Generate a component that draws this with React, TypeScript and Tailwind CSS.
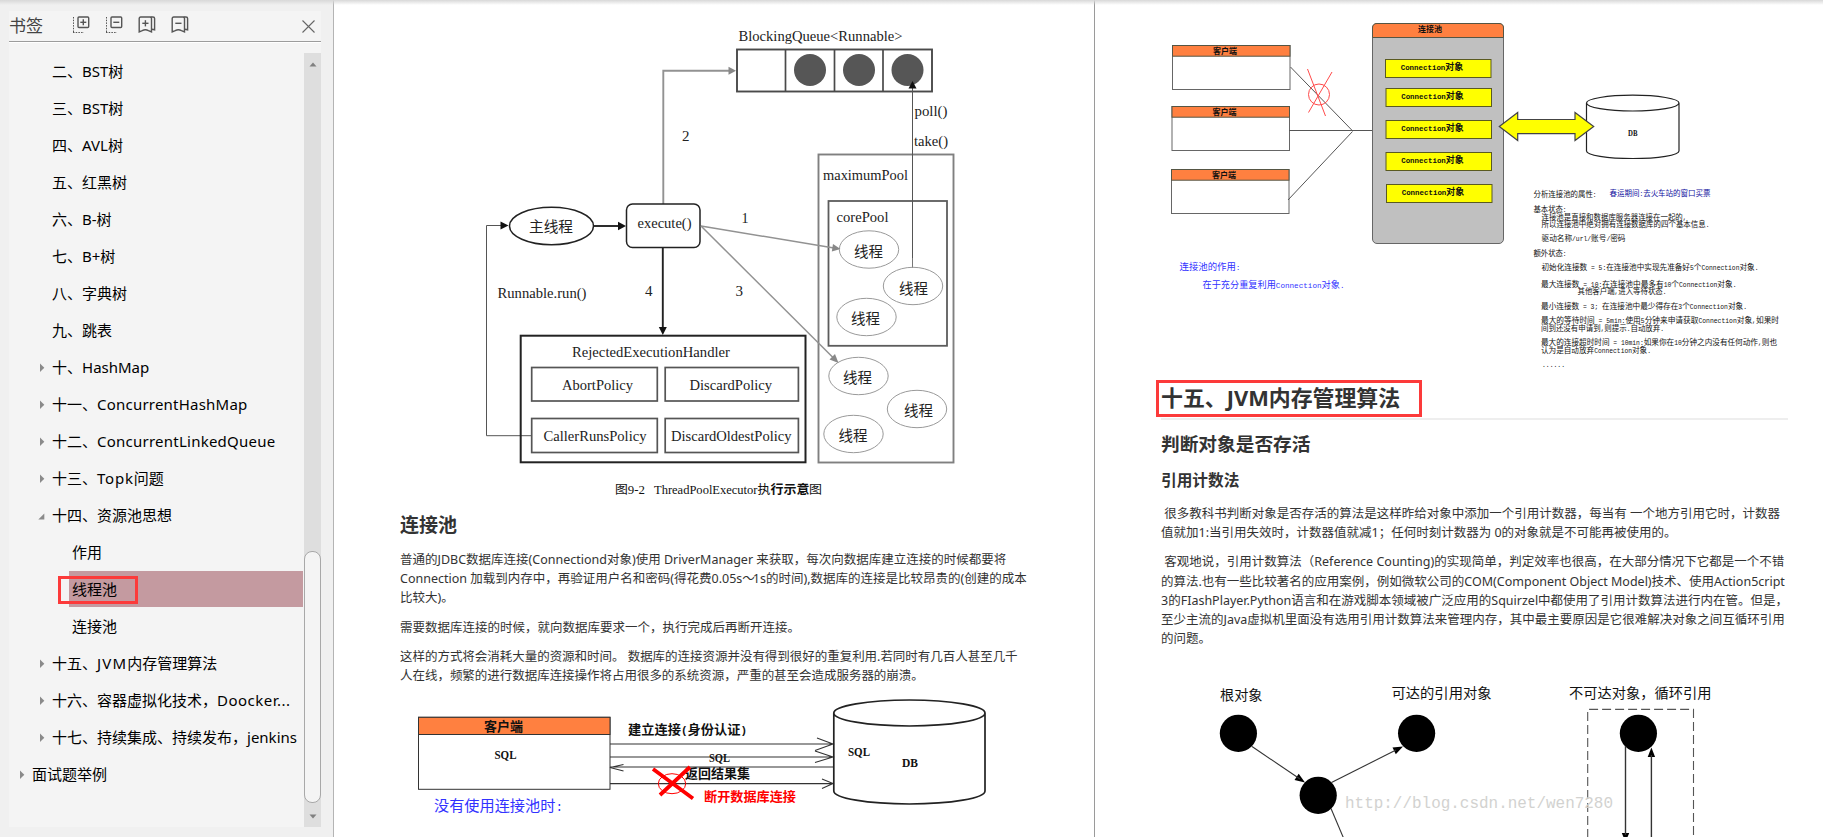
import React from 'react';

type Bookmark = {
  title: string;
  level: 0 | 1 | 2;
  arrow?: 'closed' | 'open';
  active?: boolean;
  tracking?: string;
};

const bookmarks: Bookmark[] = [
  { title: '二、BST树', level: 1 },
  { title: '三、BST树', level: 1 },
  { title: '四、AVL树', level: 1 },
  { title: '五、红黑树', level: 1 },
  { title: '六、B-树', level: 1 },
  { title: '七、B+树', level: 1 },
  { title: '八、字典树', level: 1 },
  { title: '九、跳表', level: 1 },
  { title: '十、HashMap', level: 1, arrow: 'closed' },
  { title: '十一、ConcurrentHashMap', level: 1, arrow: 'closed', tracking: 'tracking-[0.22px]' },
  { title: '十二、ConcurrentLinkedQueue', level: 1, arrow: 'closed', tracking: 'tracking-[0.24px]' },
  { title: '十三、Topk问题', level: 1, arrow: 'closed', tracking: 'tracking-[0.8px]' },
  { title: '十四、资源池思想', level: 1, arrow: 'open' },
  { title: '作用', level: 2 },
  { title: '线程池', level: 2, active: true },
  { title: '连接池', level: 2 },
  { title: '十五、JVM内存管理算法', level: 1, arrow: 'closed', tracking: 'tracking-[1.2px]' },
  { title: '十六、容器虚拟化技术，Doocker...', level: 1, arrow: 'closed', tracking: 'tracking-[0.5px]' },
  { title: '十七、持续集成、持续发布，jenkins', level: 1, arrow: 'closed' },
  { title: '面试题举例', level: 0, arrow: 'closed' },
];

const levelPadding = {
  0: 'pl-[9px]',
  1: 'pl-[29px]',
  2: 'pl-[49px]',
};

const SERIF = '"Liberation Serif", "Noto Sans CJK SC", serif';
const SONG = '"Liberation Mono", "Noto Sans CJK SC", monospace';
const SANS = '"Noto Sans", "Noto Sans CJK SC", sans-serif';

// Splits a mixed string into runs of ASCII and CJK characters
const splitRuns = (text: string) => text.split(/([\x20-\x7e]+)/).filter(Boolean);
const isLatin = (run: string) => /^[\x20-\x7e]/.test(run);

type LabelProps = {
  x: number;
  y: number;
  w: number;
  size: number;
  children: string;
  font?: string;
  fill?: string;
  bold?: boolean;
};

// One line of diagram text, fitted to the width w
function Label({ x, y, w, size, children, font = SERIF, fill = '#222', bold }: LabelProps) {
  return (
    <text
      x={x}
      y={y}
      fontSize={size}
      fontFamily={font}
      fontWeight={bold ? 700 : 400}
      fill={fill}
      textLength={w}
      lengthAdjust="spacingAndGlyphs"
      xmlSpace="preserve"
    >
      {font === SONG
        ? splitRuns(children).map((run, i) => (
            // half-width letters take exactly half of a CJK cell
            <tspan key={i} fontSize={isLatin(run) ? size * 0.833 : size}>
              {run}
            </tspan>
          ))
        : children}
    </text>
  );
}

function TreeArrow({ kind }: { kind?: 'closed' | 'open' }) {
  return (
    <svg className="w-[10px] h-[10px] mr-[4px] shrink-0" viewBox="0 0 10 10">
      {kind === 'closed' && <path d="M2 0.5 L6.3 4.8 L2 9 Z" fill="#8a8a8a" />}
      {kind === 'open' && <path d="M6.3 2.5 V8.5 H0.3 Z" fill="#8a8a8a" />}
    </svg>
  );
}

function ExpandIcon({ plus }: { plus?: boolean }) {
  return (
    <svg className="w-[18px] h-[18px]" viewBox="0 0 18 18" fill="none" stroke="#555">
      <path d="M1.5 1 V17" strokeDasharray="1.5 1.2" />
      <path d="M1 16.5 H12" strokeDasharray="1.5 1.2" />
      <rect x="6" y="1" width="10.7" height="10.5" rx="1" strokeWidth="1.4" />
      <path d="M8.3 6.3 H14.3" strokeWidth="1.4" />
      {plus && <path d="M11.3 3.3 V9.3" strokeWidth="1.4" />}
    </svg>
  );
}

function RibbonIcon({ plus }: { plus?: boolean }) {
  return (
    <svg className="w-[18px] h-[18px]" viewBox="0 0 18 18" fill="none" stroke="#555" strokeWidth="1.4">
      <path d="M1.2 16 V2.5 Q1.2 1 2.7 1 H12 Q13.5 1 13.5 2.5 V16 L10.5 14.6 Q7.3 13 4.2 14.6 Z" />
      <path d="M12.5 1 H15 Q16.6 1 16.6 2.5 V13.8 L14 13.2" />
      <path d="M4.3 7.3 H10.5" />
      {plus && <path d="M7.4 4.2 V10.4" />}
    </svg>
  );
}

function BookmarkTitle({ title, tracking = '' }: { title: string; tracking?: string }) {
  return (
    <span>
      {splitRuns(title).map((run, i) => (
        <span key={i} className={isLatin(run) ? tracking : ''}>
          {run}
        </span>
      ))}
    </span>
  );
}

function Sidebar() {
  return (
    <aside className="w-[334px] h-full shrink-0 bg-[#f0f0f0] border-r border-[#b4b4b4] pt-[11px] pl-[9px]">
      <div className="w-[312px] h-[816px] bg-[#f4f4f4] flex flex-col">
        <header className="h-[31px] border-b border-[#9c9c9c] flex items-center shrink-0">
          <h1 className="w-[63px] text-[17px] text-[#444]">书签</h1>
          <div className="flex gap-[15px] pb-[2px]">
            <ExpandIcon plus />
            <ExpandIcon />
            <RibbonIcon plus />
            <RibbonIcon />
          </div>
          <svg className="w-[13px] h-[13px] ml-auto mr-[6px] mt-px" viewBox="0 0 13 13" stroke="#666" strokeWidth="1.1">
            <path d="M0.5 0.5 L12.5 12.5 M12.5 0.5 L0.5 12.5" />
          </svg>
        </header>
        <div className="flex-1 flex border-t border-white pt-[10px] min-h-0">
          <ul className="w-[295px] text-[15px] text-black">
            {bookmarks.map((b) => (
              <li key={b.title} className={`h-[37px] flex items-center whitespace-nowrap ${levelPadding[b.level]}`}>
                {!b.active && <TreeArrow kind={b.arrow} />}
                {b.active ? (
                  <div className="relative ml-[11px] mb-px pl-[3px] w-[234px] h-[36px] bg-[#c49aa0] flex items-center">
                    {b.title}
                    <div className="absolute -left-[11px] top-[5px] w-[80px] h-[28px] border-[3px] border-[#fc3a3a]" />
                  </div>
                ) : (
                  <BookmarkTitle title={b.title} tracking={b.tracking} />
                )}
              </li>
            ))}
          </ul>
          <div className="w-[17px] bg-[#dedede] flex flex-col items-center">
            <svg className="w-[8px] h-[5px] mt-[9px]" viewBox="0 0 8 5">
              <path d="M0.5 4.5 L4 0.5 L7.5 4.5 Z" fill="#808080" />
            </svg>
            <div className="w-[17px] h-[252px] mt-auto rounded-[8px] bg-[#f4f4f4] border border-[#a8a8a8]" />
            <svg className="w-[8px] h-[5px] mt-[11px] mb-[8px]" viewBox="0 0 8 5">
              <path d="M0.5 0.5 L4 4.5 L7.5 0.5 Z" fill="#808080" />
            </svg>
          </div>
        </div>
      </div>
    </aside>
  );
}

const threads = [
  { cx: 869, cy: 249.5, tx: 854, ty: 256.5 },
  { cx: 913, cy: 286, tx: 899, ty: 293.5 },
  { cx: 866.5, cy: 317, tx: 851, ty: 324 },
  { cx: 858.5, cy: 376, tx: 843, ty: 383 },
  { cx: 917, cy: 409, tx: 904, ty: 416 },
  { cx: 853.5, cy: 434, tx: 838.5, ty: 441 },
];

function ThreadPoolDiagram() {
  return (
    <svg className="block w-[760px] h-[510px]" viewBox="334 0 760 510" fill="none">
      <Label x={738.5} y={41} w={164} size={15.5}>{'BlockingQueue<Runnable>'}</Label>
      <rect x="737" y="49.5" width="195" height="42" stroke="#4a4a4a" strokeWidth="1.9" />
      <path d="M785.5 50 V91 M834.5 50 V91 M883 50 V91" stroke="#4a4a4a" strokeWidth="1.7" />
      <circle cx="810" cy="70" r="16" fill="#565656" />
      <circle cx="859" cy="70" r="16" fill="#565656" />
      <circle cx="907.5" cy="70" r="16" fill="#565656" />

      <path d="M663.3 204 V70.8 H730" stroke="#929292" strokeWidth="1.9" />
      <path d="M728.5 66.8 L736 70.8 L728.5 74.8 Z" fill="#888" />

      <rect x="818.5" y="154.5" width="135" height="308" stroke="#808080" strokeWidth="1.9" />
      <rect x="828.5" y="201" width="118.5" height="144.8" stroke="#5c5c5c" strokeWidth="1.8" />
      <path d="M912.5 258 V86" stroke="#555" />
      <path d="M912.5 258 V268" stroke="#777" />
      <path d="M908.5 88.5 L912.5 81 L916.5 88.5 Z" fill="#111" />
      <Label x={914.5} y={115.7} w={33} size={15}>poll()</Label>
      <Label x={914} y={146.3} w={34} size={15}>take()</Label>
      <Label x={823} y={180} w={85} size={15}>maximumPool</Label>
      <Label x={836.5} y={222} w={52} size={15}>corePool</Label>

      {threads.map((t) => (
        <g key={t.cx}>
          <ellipse cx={t.cx} cy={t.cy} rx="29.7" ry="18.7" stroke="#9a9a9a" strokeWidth="1" />
          <Label x={t.tx} y={t.ty} w={29} size={14.5}>线程</Label>
        </g>
      ))}

      <ellipse cx="551.5" cy="226" rx="42" ry="18.7" stroke="#222" strokeWidth="1.5" />
      <Label x={529} y={231.5} w={44} size={14.6}>主线程</Label>
      <path d="M594 226 H620" stroke="#222" strokeWidth="1.9" />
      <path d="M618 221.8 L626 226 L618 230.2 Z" fill="#111" />
      <rect x="626.5" y="204" width="73.5" height="43.5" rx="6" stroke="#222" strokeWidth="1.5" />
      <Label x={637.5} y={228.3} w={54} size={15}>execute()</Label>

      <path d="M532 435.7 H486.5 V225.5 H502" stroke="#555" />
      <path d="M500.5 221.5 L508.5 225.5 L500.5 229.5 Z" fill="#111" />
      <Label x={497.5} y={298.3} w={89} size={15}>Runnable.run()</Label>

      <path d="M701 226 L834 248" stroke="#929292" strokeWidth="1.5" />
      <path d="M840.5 249 L831.8 251.6 L833 244 Z" fill="#888" />
      <path d="M701 226 L833 357.5" stroke="#929292" strokeWidth="1.5" />
      <path d="M838.5 363 L829.5 359.5 L835 354 Z" fill="#888" />
      <path d="M662.8 248 V328" stroke="#222" strokeWidth="1.9" />
      <path d="M658.8 327 L662.8 335 L666.8 327 Z" fill="#111" />
      <Label x={682} y={140.7} w={7.5} size={15}>2</Label>
      <Label x={741.5} y={222.7} w={7} size={15}>1</Label>
      <Label x={735.5} y={296} w={7.5} size={15}>3</Label>
      <Label x={645} y={296} w={7.5} size={15}>4</Label>

      <rect x="520.7" y="335.7" width="284.8" height="126.6" stroke="#222" strokeWidth="2" />
      <Label x={572} y={357.3} w={158} size={15}>RejectedExecutionHandler</Label>
      <g stroke="#555" strokeWidth="1.7">
        <rect x="531.7" y="367.5" width="125.6" height="33.5" />
        <rect x="665.2" y="367.5" width="133.2" height="33.5" />
        <rect x="531.7" y="418.5" width="125.6" height="34" />
        <rect x="665.2" y="418.5" width="133.2" height="34" />
      </g>
      <Label x={562} y={390} w={71} size={15}>AbortPolicy</Label>
      <Label x={689.5} y={390} w={82.5} size={15}>DiscardPolicy</Label>
      <Label x={543.5} y={441.3} w={103} size={15}>CallerRunsPolicy</Label>
      <Label x={671} y={441.3} w={120.5} size={15}>DiscardOldestPolicy</Label>

      <Label x={615} y={494.3} w={30} size={12.5} fill="#111">图9-2</Label>
      <Label x={654} y={494.3} w={103.5} size={12.5} fill="#111">ThreadPoolExecutor</Label>
      <Label x={757.5} y={494.3} w={13} size={12.5} fill="#111">执</Label>
      <Label x={770.5} y={494.3} w={39} size={12.5} fill="#111" bold>行示意</Label>
      <Label x={809} y={494.3} w={13} size={12.5} fill="#111">图</Label>
    </svg>
  );
}

function NoPoolDiagram() {
  return (
    <svg className="block w-[760px] h-[147px]" viewBox="334 690 760 147" fill="none">
      <rect x="418.5" y="717.3" width="191.5" height="72" stroke="#333" fill="#fff" />
      <rect x="418.5" y="717.3" width="191.5" height="17.2" stroke="#333" fill="#ff8040" />
      <Label x={484} y={731} w={39} size={13} bold font={SONG} fill="#111">客户端</Label>
      <Label x={494.5} y={759} w={22} size={13.5} bold fill="#111">SQL</Label>
      <Label x={628} y={733.5} w={119} size={13} bold font={SONG} fill="#111">建立连接(身份认证)</Label>

      <g stroke="#333" strokeWidth="1.1">
        <path d="M610 744 H833 M817 738 L833 744 L815 750.5" />
        <path d="M610 757 H833 M815 751 L833 757 L815 762.5" />
        <path d="M833 767 H610 M623.5 764.5 L610 767.5 L623.5 771" />
        <path d="M610 783.6 H833 M822 779 L833 783.6 L822 788.5" />
      </g>
      <Label x={709} y={761.5} w={21} size={13} bold fill="#111">SQL</Label>
      <Label x={685} y={777.7} w={65} size={13} bold font={SONG} fill="#111">返回结果集</Label>
      <ellipse cx="672" cy="783.7" rx="13.7" ry="10" stroke="#f00" />
      <path d="M653 769 L693 798.5 M690 767 L660 795" stroke="#f00" strokeWidth="3.8" />
      <Label x={704} y={801} w={92} size={13} bold font={SONG} fill="#f00">断开数据库连接</Label>
      <Label x={434} y={811} w={129} size={15} font={SONG} fill="#3232ff">没有使用连接池时:</Label>

      <path
        d="M833.8 713 A75.5 13 0 0 1 985 713 V791 A75.5 13 0 0 1 833.8 791 Z M833.8 713 A75.5 13 0 0 0 985 713"
        stroke="#222"
        strokeWidth="1.7"
      />
      <Label x={848} y={756} w={22} size={13.5} bold fill="#111">SQL</Label>
      <Label x={902} y={767} w={16} size={13.5} bold fill="#111">DB</Label>
    </svg>
  );
}

const clients = [
  { x: 1172.5, y: 45.5 },
  { x: 1172, y: 106.5 },
  { x: 1171.5, y: 169.5 },
];

const connections = [
  { x: 1385.5, y: 59.5 },
  { x: 1386, y: 88.5 },
  { x: 1386, y: 120.5 },
  { x: 1386, y: 152.5 },
  { x: 1386.5, y: 184.5 },
];

const notes: { x: number; cy: number; w: number; text: string; fill?: string }[] = [
  { x: 1533.5, cy: 194, w: 63, text: '分析连接池的属性:' },
  { x: 1609.5, cy: 192.5, w: 101, text: '春运期间:去火车站的窗口买票', fill: '#1010a0' },
  { x: 1533.5, cy: 208.7, w: 33, text: '基本状态:' },
  { x: 1541.5, cy: 216.5, w: 145, text: '连接池是直接和数据库服务器连接在一起的,' },
  { x: 1541.5, cy: 224, w: 168, text: '所以连接池中绝对拥有连接数据库的四个基本信息.' },
  { x: 1541.5, cy: 238, w: 84, text: '驱动名称/url/账号/密码' },
  { x: 1533.5, cy: 252.5, w: 33, text: '额外状态:' },
  { x: 1541.5, cy: 267, w: 217, text: '初始化连接数 = 5:在连接池中实现先准备好5个Connection对象.' },
  { x: 1541, cy: 284, w: 195.5, text: '最大连接数 = 10:在连接池中最多有10个Connection对象.' },
  { x: 1577.5, cy: 291, w: 89, text: '其他客户端,进入等待状态.' },
  { x: 1541, cy: 305.5, w: 206, text: '最小连接数 = 3; 在连接池中最少得存在3个Connection对象.' },
  { x: 1541, cy: 320, w: 238, text: '最大的等待时间 = 5min:使用5分钟来申请获取Connection对象,如果时' },
  { x: 1541, cy: 327.5, w: 123, text: '间到还没有申请到,则提示.自动放弃.' },
  { x: 1541, cy: 342, w: 236, text: '最大的连接超时时间 = 10min:如果你在10分钟之内没有任何动作,则也' },
  { x: 1541, cy: 349.5, w: 110, text: '认为是自动放弃Connection对象.' },
  { x: 1542, cy: 363.5, w: 23, text: '......' },
];

function PoolDiagram() {
  return (
    <svg className="block w-[728px] h-[375px]" viewBox="1095 0 728 375" fill="none">
      {clients.map((c) => (
        <g key={c.y}>
          <rect x={c.x} y={c.y} width="117.5" height="44" stroke="#666" fill="#fff" />
          <rect x={c.x} y={c.y} width="117.5" height="10.7" stroke="#554" fill="#ff8040" />
          <Label x={c.x + 40.5} y={c.y + 8.3} w={24} size={8} bold font={SONG} fill="#111">客户端</Label>
        </g>
      ))}
      <path d="M1290.5 67 L1352.5 130.8 M1289 130.5 H1372.5 M1288 200 L1352.5 131.5" stroke="#555" />
      <g stroke="#ff4a4a">
        <circle cx="1319" cy="94.5" r="10.5" />
        <path d="M1307.5 69 L1325.5 116 M1332 72 L1308.5 112.5" />
      </g>

      <rect x="1372.5" y="23.5" width="131" height="220" rx="4.5" stroke="#666" fill="#c0c0c0" />
      <path d="M1372.5 37.5 V28 Q1372.5 23.5 1377 23.5 H1499 Q1503.5 23.5 1503.5 28 V37.5 Z" stroke="#554" fill="#ff8040" />
      <Label x={1418} y={31.5} w={24} size={8} bold font={SONG} fill="#111">连接池</Label>
      {connections.map((c) => (
        <g key={c.y}>
          <rect x={c.x} y={c.y} width="105.5" height="18" stroke="#5a5a20" fill="#ff0" />
          <Label x={c.x + 15.2} y={c.y + 10.7} w={62.5} size={8.6} bold font={SONG} fill="#111">Connection对象</Label>
        </g>
      ))}

      <path
        d="M1586.5 103 A46.2 7.8 0 0 1 1679 103 V151 A46.2 7.5 0 0 1 1586.5 151 Z M1586.5 103 A46.2 8 0 0 0 1679 103"
        stroke="#222"
        strokeWidth="1.2"
      />
      <path
        d="M1499.3 126.5 L1517.7 112.5 V119.5 H1575 V112.5 L1593.7 126.5 L1575 140.5 V133.7 H1517.7 V140.5 Z"
        stroke="#444"
        strokeWidth="1.2"
        fill="#ff0"
      />
      <Label x={1628} y={136} w={9.5} size={8} bold fill="#111">DB</Label>

      <Label x={1179.5} y={269.7} w={61} size={9.3} font={SONG} fill="#3232ff">连接池的作用:</Label>
      <Label x={1202.5} y={288} w={142} size={9.3} font={SONG} fill="#3232ff">在于充分重复利用Connection对象.</Label>
      {notes.map((n) => (
        <Label key={n.cy} x={n.x} y={n.cy + 3} w={n.w} size={7.8} font={SONG} fill={n.fill ?? '#111'}>
          {n.text}
        </Label>
      ))}
    </svg>
  );
}

function ReachabilityDiagram() {
  return (
    <svg className="block w-[728px] h-[167px]" viewBox="1095 670 728 167" fill="none">
      <Label x={1220} y={700.3} w={42.5} size={14.2} font={SANS} fill="#111">根对象</Label>
      <Label x={1391.5} y={698.2} w={100} size={14.2} font={SANS} fill="#111">可达的引用对象</Label>
      <Label x={1569} y={698.2} w={142.5} size={14.2} font={SANS} fill="#111">不可达对象，循环引用</Label>

      <g fill="#000">
        <circle cx="1238.4" cy="733.3" r="18.6" />
        <circle cx="1416.6" cy="733.3" r="18.6" />
        <circle cx="1318.2" cy="795.3" r="18.6" />
        <circle cx="1638.4" cy="733.3" r="18.6" />
        <path d="M1305 782.5 L1294.5 780 L1298.7 773.8 Z" />
        <path d="M1403 746.5 L1395.8 754.3 L1392.5 747.5 Z" />
        <path d="M1621.8 833 H1629.2 L1625.5 842 Z" />
        <path d="M1647.7 757 H1655.1 L1651.4 747.5 Z" />
      </g>
      <g stroke="#333" strokeWidth="1.1">
        <path d="M1252 746.5 L1300 779" />
        <path d="M1331.5 782.5 L1396 750" />
        <path d="M1331 808.5 L1343.5 838" />
        <path d="M1625.5 746 V835" strokeWidth="1.4" />
        <path d="M1651.4 755 V838" strokeWidth="1.4" />
        <path d="M1587.7 838 V709.4 H1693.5 V838" stroke="#555" strokeDasharray="9 4" />
      </g>
      <Label x={1345} y={807.5} w={268} size={19} font={SONG} fill="#d2d2d0">
        http://blog.csdn.net/wen7280
      </Label>
    </svg>
  );
}

function LeftPage() {
  return (
    <section className="w-[761px] h-full shrink-0 bg-white border-r border-[#9a9a9a]">
      <ThreadPoolDiagram />
      <div className="h-[180px] pl-[66px] text-[12.5px] leading-[19.2px] text-[#333] whitespace-pre">
        <h3 className="text-[19px] leading-[30px] font-bold">连接池</h3>
        <p className="mt-[10px]">
          普通的JDBC数据库连接(Connectiond对象)使用 DriverManager 来获取，每次向数据库建立连接的时候都要将
          <br />
          Connection 加载到内存中，再验证用户名和密码(得花费0.05s<span className="tracking-[-2px]">～</span>1s的时间),数据库的连接是比较昂贵的(创建的成本
          <br />
          比较大)。
        </p>
        <p className="mt-[10px]">需要数据库连接的时候，就向数据库要求一个，执行完成后再断开连接。</p>
        <p className="mt-[10px] tracking-[-0.03px]">
          {'这样的方式将会消耗大量的资源和时间。 数据库的连接资源并没有得到很好的重复利用.若同时有几百人甚至几千'}
          <br />
          人在线，频繁的进行数据库连接操作将占用很多的系统资源，严重的甚至会造成服务器的崩溃。
        </p>
      </div>
      <NoPoolDiagram />
    </section>
  );
}

function RightPage() {
  return (
    <section className="flex-1 h-full bg-white">
      <PoolDiagram />
      <div className="h-[295px] pl-[66px] pt-[5px] text-[12.5px] leading-[19.2px] text-[#333] whitespace-pre">
        <div className="-ml-[5px] w-[266px] h-[37px] pl-[2px] pb-px border-[3px] border-[#fc3a3a] flex items-center">
          <h2 className="text-[21.9px] font-bold">十五、JVM内存管理算法</h2>
        </div>
        <div className="w-[627px] h-[2px] mt-px bg-[#eee]" />
        <h3 className="mt-[9px] text-[18.7px] leading-[30px] font-bold">判断对象是否存活</h3>
        <h4 className="mt-[9px] text-[15.7px] leading-[24px] font-bold">引用计数法</h4>
        <p className="mt-[12px]">
          {' 很多教科书判断对象是否存活的算法是这样昨给对象中添加一个引用计数器，每当有 一个地方引用它时，计数器'}
          <br />
          值就加1:当引用失效时，计数器值就减1；任何时刻计数器为 0的对象就是不可能再被使用的。
        </p>
        <p className="mt-[10px]">
          {' 客观地说，引用计数算法（Reference Counting)的实现简单，判定效率也很高，在大部分情况下它都是一个不错'}
          <br />
          的算法.也有一些比较著名的应用案例，例如微软公司的COM(Component Object Model)技术、使用Action5cript
          <br />
          3的FIashPlayer.Python语言和在游戏脚本领域被广泛应用的Squirzel中都使用了引用计数算法进行内在管。但是，
          <br />
          至少主流的Java虚拟机里面没有选用引用计数算法来管理内存，其中最主要原因是它很难解决对象之间互循环引用
          <br />
          的问题。
        </p>
      </div>
      <ReachabilityDiagram />
    </section>
  );
}

export default function App() {
  return (
    <div className="relative w-[1823px] h-[837px] overflow-hidden flex bg-white font-['Noto_Sans','Noto_Sans_CJK_SC',sans-serif]">
      <Sidebar />
      <LeftPage />
      <RightPage />
      <div className="absolute inset-x-0 top-0 h-[5px] bg-gradient-to-b from-[#d8d8d8] to-transparent" />
    </div>
  );
}
